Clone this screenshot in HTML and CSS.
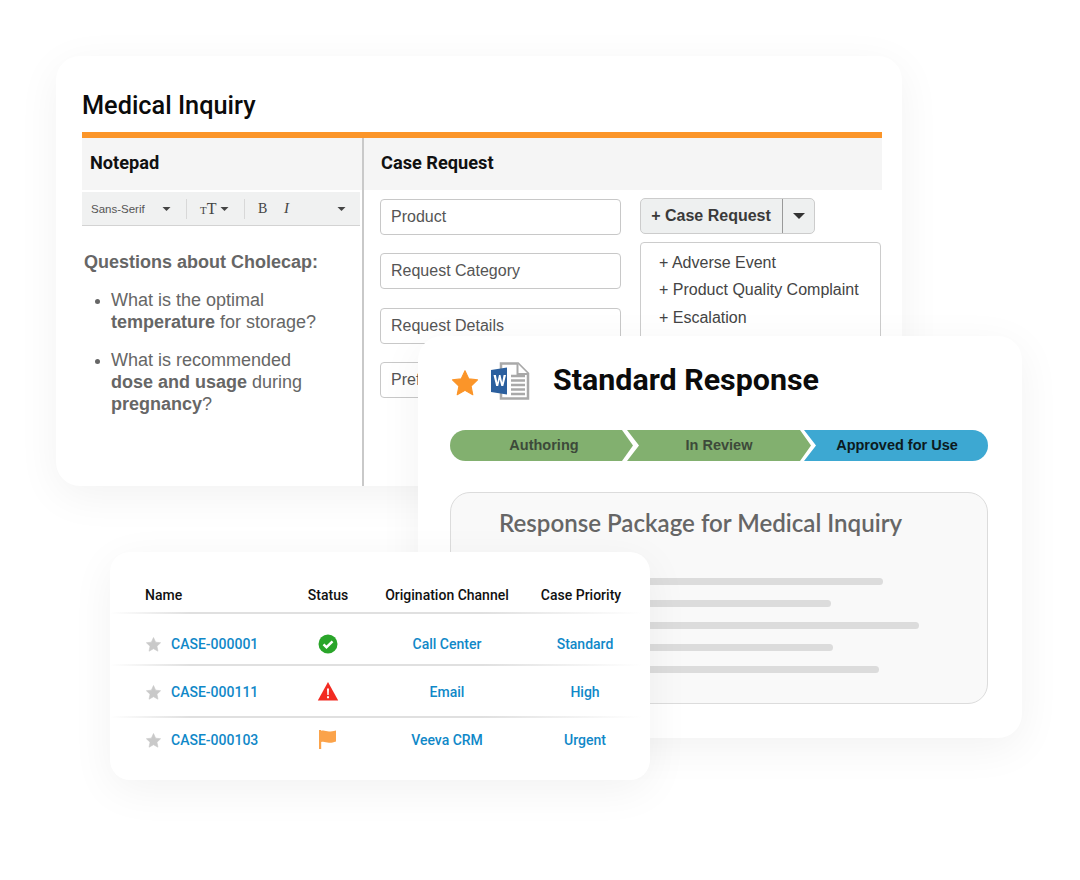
FILE: index.html
```html
<!DOCTYPE html>
<html lang="en">
<head>
    <meta charset="UTF-8">
    <title>Medical Inquiry</title>
    <link rel="stylesheet" href="styles.css">
</head>
<body>
    <div class="stage">
        <!-- Medical Inquiry window -->
        <section class="card inquiry">
            <h1>Medical Inquiry</h1>
            <div class="inquiry-body">
                <div class="notepad">
                    <h2 class="panel-head">Notepad</h2>
                    <div class="toolbar">
                        <span class="tool-font">Sans-Serif</span>
                        <svg class="caret" viewBox="0 0 8 4"><path d="M0 0h8L4 4z"/></svg>
                        <span class="tool-sep"></span>
                        <span class="tool-size"><small>T</small>T</span>
                        <svg class="caret" viewBox="0 0 8 4"><path d="M0 0h8L4 4z"/></svg>
                        <span class="tool-sep"></span>
                        <b class="tool-b">B</b>
                        <i class="tool-i">I</i>
                        <svg class="caret" viewBox="0 0 8 4"><path d="M0 0h8L4 4z"/></svg>
                    </div>
                    <div class="note">
                        <p class="note-title">Questions about Cholecap:</p>
                        <ul>
                            <li>What is the optimal <b>temperature</b> for storage?</li>
                            <li>What is recommended <b>dose and usage</b> during <b>pregnancy</b>?</li>
                        </ul>
                    </div>
                </div>
                <div class="request">
                    <h2 class="panel-head">Case Request</h2>
                    <div class="request-cols">
                        <div class="fields">
                            <div class="field">Product</div>
                            <div class="field">Request Category</div>
                            <div class="field">Request Details</div>
                            <div class="field">Preferred</div>
                        </div>
                        <div class="actions">
                            <div class="split-btn">
                                <span class="split-label">+ Case Request</span>
                                <span class="split-arrow"><svg viewBox="0 0 12 6"><path d="M0 0h12L6 6z"/></svg></span>
                            </div>
                            <ul class="add-list">
                                <li>+ Adverse Event</li>
                                <li>+ Product Quality Complaint</li>
                                <li>+ Escalation</li>
                            </ul>
                        </div>
                    </div>
                </div>
            </div>
        </section>

        <!-- Standard Response window -->
        <section class="card response">
            <div class="response-head">
                <svg class="star-big" viewBox="0 0 28 28"><path d="M14 2.500l3.500 7.600 8.200 1-6 5.700 1.600 8.200L14 20.900l-7.300 4.100 1.600-8.200-6-5.700 8.200-1z"/></svg>
                <svg class="word" viewBox="0 0 39 38">
                    <path d="M10 1.500h17l10 10v25H10z" fill="#fff" stroke="#a9a9a9" stroke-width="2.500"/>
                    <path d="M26.500 1.500v10.500H37" fill="#fff" stroke="#a9a9a9" stroke-width="2"/>
                    <path d="M20 14h14M20 18.500h14M20 23h14M20 27.500h14M20 32h14" stroke="#a9a9a9" stroke-width="2.500"/>
                    <path d="M0 8l16-2.500v27L0 30z" fill="#2b5f9e"/>
                    <path d="M2.500 13h2.400l1.400 7.500L8 13h1.500l1.700 7.500L12.600 13H15l-2.700 11h-2L8.700 17.500 7.200 24h-2z" fill="#fff"/>
                </svg>
                <h1>Standard Response</h1>
            </div>
            <div class="stepper">
                <div class="step step-first">Authoring</div>
                <div class="step step-mid">In Review</div>
                <div class="step step-last">Approved for Use</div>
            </div>
            <div class="package">
                <h3>Response Package for Medical Inquiry</h3>
                <div class="line line-a"></div>
                <div class="line line-b"></div>
                <div class="line line-c"></div>
                <div class="line line-d"></div>
                <div class="line line-e"></div>
            </div>
        </section>

        <!-- Case list -->
        <section class="card cases">
            <div class="case-row case-head">
                <span class="col-name">Name</span>
                <span>Status</span>
                <span>Origination Channel</span>
                <span class="col-priority">Case Priority</span>
            </div>
            <div class="case-row case-first">
                <span class="col-name">
                    <svg class="star" viewBox="0 0 28 28"><path d="M14 2.500l3.500 7.600 8.200 1-6 5.700 1.600 8.200L14 20.900l-7.300 4.100 1.600-8.200-6-5.700 8.200-1z"/></svg>
                    <a>CASE-000001</a>
                </span>
                <span class="status">
                    <svg viewBox="0 0 20 20"><circle cx="10" cy="10" r="9.500" fill="#2aa52a"/><path d="M5.500 10.300l3 2.900 6-5.900" fill="none" stroke="#fff" stroke-width="2.400"/></svg>
                </span>
                <a>Call Center</a>
                <a>Standard</a>
            </div>
            <div class="case-row">
                <span class="col-name">
                    <svg class="star" viewBox="0 0 28 28"><path d="M14 2.500l3.500 7.600 8.200 1-6 5.700 1.600 8.200L14 20.900l-7.300 4.100 1.600-8.200-6-5.700 8.200-1z"/></svg>
                    <a>CASE-000111</a>
                </span>
                <span class="status">
                    <svg viewBox="0 0 20 20"><path d="M10 0l10.200 18.500H-.2z" fill="#f22b22"/><path d="M9 6.500h2l-.3 6.500H9.300zM9 14.200h2v2H9z" fill="#fff"/></svg>
                </span>
                <a>Email</a>
                <a>High</a>
            </div>
            <div class="case-row case-last">
                <span class="col-name">
                    <svg class="star" viewBox="0 0 28 28"><path d="M14 2.500l3.500 7.600 8.200 1-6 5.700 1.600 8.200L14 20.900l-7.300 4.100 1.600-8.200-6-5.700 8.200-1z"/></svg>
                    <a>CASE-000103</a>
                </span>
                <span class="status">
                    <svg viewBox="0 0 20 20"><path d="M1 0h2.200v19H1z" fill="#fba34a"/><path d="M3 1c3-1.200 5 .6 8 .6 2.500 0 4-.6 7-1.100V11.500c-3 1-4.500 1.300-7 1.200-3-.1-5-1.500-8-.6z" fill="#fba34a"/></svg>
                </span>
                <a>Veeva CRM</a>
                <a>Urgent</a>
            </div>
        </section>
    </div>
</body>
</html>
```

FILE: styles.css
```css
body {
    margin: 0;
    background-color: #fff;
    font-family: "Liberation Sans", Arial, sans-serif;
}

h1, h2, h3, p, ul {
    margin: 0;
    padding: 0;
}

.stage {
    position: relative;
    width: 1080px;
    height: 880px;
    overflow: hidden;
}

/* Ventanas sobre el lienzo */
.card {
    position: absolute;
    box-sizing: border-box;
    background-color: #fff;
    border-radius: 24px;
    box-shadow: 0 10px 44px rgba(0, 0, 0, 0.055);
}

.inquiry {
    left: 56px;
    top: 56px;
    width: 846px;
    height: 430px;
    padding: 0 20px 0 26px;
    display: flex;
    flex-direction: column;
}

.response {
    left: 418px;
    top: 336px;
    width: 604px;
    height: 402px;
    padding: 0 34px 0 32px;
}

.cases {
    left: 110px;
    top: 552px;
    width: 540px;
    height: 228px;
    border-radius: 20px;
}

/* Medical Inquiry */
.inquiry h1 {
    box-sizing: border-box;
    height: 82px;
    padding-top: 34px;
    font: 500 25.300px/32px Roboto, sans-serif;
    color: #0b0b0b;
    border-bottom: 6px solid #fb9529;
}

.inquiry-body {
    flex: 1;
    display: flex;
    min-height: 0;
}

.notepad {
    width: 280px;
    border-right: 2px solid #c9c9c9;
}

.request {
    flex: 1;
}

.panel-head {
    height: 52px;
    padding-left: 8px;
    font: 700 18.200px/49px Roboto, sans-serif;
    color: #111;
    background-color: #f5f5f5;
}

.request .panel-head {
    padding-left: 17px;
}

.toolbar {
    display: flex;
    align-items: center;
    box-sizing: border-box;
    width: 278px;
    height: 34px;
    margin-top: 2px;
    padding-left: 9px;
    background-color: #f0f1f1;
    border-bottom: 1px solid #d3d3d3;
    font-size: 11.500px;
    color: #555;
}

.caret {
    width: 9px;
    height: 4px;
    fill: #444;
}

.tool-font {
    width: 71px;
}

.tool-sep {
    width: 1px;
    height: 20px;
    margin: 0 13px 0 15px;
    background-color: #d8d8d8;
}

.tool-size {
    width: 20px;
    font: 16px "Liberation Serif", serif;
    color: #444;
}

.tool-size small {
    font-size: 11px;
}

.tool-b {
    width: 26px;
    font: 14px "Liberation Serif", serif;
    color: #444;
}

.tool-i {
    width: 53px;
    font: italic 15px "Liberation Serif", serif;
    color: #444;
}

.note {
    padding: 25px 0 0 2px;
    color: #666;
}

.note-title {
    font-size: 18px;
    font-weight: 700;
    line-height: 22px;
}

.note ul {
    margin-top: 16px;
    padding-left: 27px;
    width: 225px;
    font-size: 18px;
    line-height: 22px;
}

.note li {
    margin-bottom: 16px;
}

.note li::marker {
    font-size: 15px;
}

.request-cols {
    display: flex;
    padding-left: 16px;
    gap: 19px;
}

.fields {
    width: 241px;
    padding-top: 9px;
}

.field {
    box-sizing: border-box;
    height: 36px;
    margin-bottom: 18.400px;
    padding-left: 10px;
    border: 1px solid #c8c8c8;
    border-radius: 4px;
    font-size: 16px;
    line-height: 33px;
    color: #555;
}

.actions {
    width: 241px;
    padding-top: 8px;
}

.split-btn {
    display: flex;
    box-sizing: border-box;
    width: 175px;
    height: 36px;
    background-color: #eef0f0;
    border: 1px solid #ccc;
    border-radius: 5px;
    color: #3a3a3a;
}

.split-label {
    width: 140px;
    padding-right: 1px;
    text-align: center;
    font-size: 16px;
    font-weight: 700;
    line-height: 33px;
    border-right: 1px solid #999;
}

.split-arrow {
    flex: 1;
    display: flex;
    align-items: center;
    justify-content: center;
}

.split-arrow svg {
    width: 12px;
    height: 6px;
    fill: #333;
}

.add-list {
    box-sizing: border-box;
    height: 130px;
    margin-top: 8px;
    padding: 6px 0 0 18px;
    list-style: none;
    border: 1px solid #ccc;
    border-radius: 4px;
    font-size: 16px;
    line-height: 27.300px;
    color: #444;
}

/* Standard Response */
.response-head {
    display: flex;
    align-items: center;
    height: 94px;
}

.response-head h1 {
    margin: -6px 0 0 23px;
    font: 700 30.400px/40px Roboto, sans-serif;
    color: #0b0b0b;
}

.star-big {
    width: 30px;
    height: 30px;
    fill: #fb9529;
    stroke: #fb9529;
    stroke-linejoin: round;
}

.word {
    width: 39px;
    height: 38px;
    margin: -5px 0 0 11px;
}

.stepper {
    display: flex;
    height: 31px;
}

.step {
    flex: 0 0 auto;
    box-sizing: border-box;
    text-align: center;
    font-size: 14.500px;
    font-weight: 700;
    line-height: 30px;
    color: #3d4a3a;
    background-color: #82b06f;
}

.step-first {
    width: 183px;
    padding-left: 5px;
    border-radius: 16px 0 0 16px;
    clip-path: polygon(0 0, calc(100% - 11px) 0, 100% 50%, calc(100% - 11px) 100%, 0 100%);
}

.step-mid {
    width: 184px;
    margin-left: -6px;
    clip-path: polygon(0 0, calc(100% - 11px) 0, 100% 50%, calc(100% - 11px) 100%, 0 100%, 12px 50%);
}

.step-last {
    width: 184px;
    margin-left: -7px;
    padding-left: 2px;
    color: #0c1a20;
    background-color: #3da8d2;
    border-radius: 0 16px 16px 0;
    clip-path: polygon(0 0, 100% 0, 100% 100%, 0 100%, 12px 50%);
}

.package {
    box-sizing: border-box;
    height: 212px;
    margin-top: 31px;
    padding: 15px 0 0 48px;
    background-color: #f9f9f9;
    border: 1px solid #dcdcdc;
    border-radius: 20px;
}

.package h3 {
    margin-bottom: 40px;
    font: 600 24.100px/30px Lato, sans-serif;
    color: #666;
}

.line {
    height: 7px;
    margin-bottom: 15px;
    border-radius: 4px;
    background-color: #dcdcdc;
}

.line-a { width: 384px; }
.line-b { width: 332px; }
.line-c { width: 420px; }
.line-d { width: 334px; }
.line-e { width: 380px; }

/* Tabla de casos */
.case-row {
    position: relative;
    display: grid;
    grid-template-columns: 180px 76px 162px 114px;
    align-items: center;
    box-sizing: border-box;
    height: 52px;
    font: 500 14px/20px Roboto, sans-serif;
    text-align: center;
    color: #1088c8;
}

.case-row::after {
    content: "";
    position: absolute;
    left: 0;
    right: 8px;
    bottom: 0;
    height: 2px;
    background: linear-gradient(90deg, rgba(220, 220, 220, 0), #e0e0e0 15%, #e0e0e0 70%, rgba(220, 220, 220, 0));
}

.case-head {
    height: 62px;
    padding-top: 24px;
    color: #111;
}

.col-priority {
    margin-left: -8px;
}

.case-first {
    padding-top: 8px;
}

.case-last {
    height: 44px;
}

.case-last::after {
    display: none;
}

.col-name {
    display: flex;
    align-items: center;
    gap: 9px;
    padding-left: 35px;
    text-align: left;
}

.star {
    width: 17px;
    height: 17px;
    fill: #c9c9c9;
    stroke: #c9c9c9;
    stroke-linejoin: round;
}

.status {
    display: flex;
    justify-content: center;
}

.status svg {
    width: 20px;
    height: 20px;
    margin-left: -1px;
    overflow: visible;
}
```
